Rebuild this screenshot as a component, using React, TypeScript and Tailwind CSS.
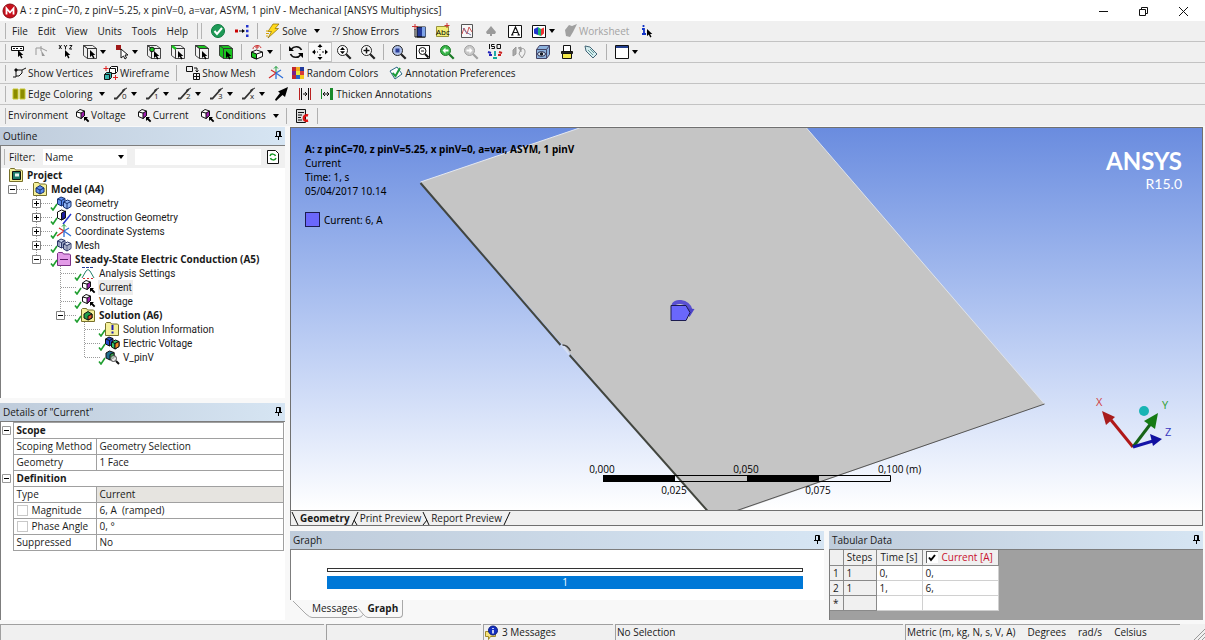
import type { ReactNode } from "react";

type IconProps = { children: ReactNode; className?: string };

const Icon = ({ children, className = "size-4" }: IconProps) => (
    <svg viewBox="0 0 16 16" className={`${className} shrink-0`} fill="none" stroke="#111" strokeWidth="1" aria-hidden="true">
        {children}
    </svg>
);

const Caret = () => (
    <svg viewBox="0 0 6 4" className="h-1 w-1.5 shrink-0" aria-hidden="true"><path d="M0 0h6L3 4z" fill="#000" /></svg>
);

const PinIcon = () => (
    <svg viewBox="0 0 7 10" className="h-2.5 w-[7px]" fill="none" stroke="#000" aria-hidden="true">
        <path d="M1.500 5.500v-5h4v5M0 5.500h7M3.500 6v3M4.500 1v4" />
    </svg>
);

const Cursor = ({ x = 8, y = 7 }: { x?: number; y?: number }) => (
    <path d="M0 0v7l1.800-1.600 1.400 3 1.300-.6-1.400-2.800h2.200z" fill="#000" stroke="none" transform={`translate(${x} ${y})`} />
);

const CubeIcon = ({ front = "none", side = "none", top = "none", children }: { front?: string; side?: string; top?: string; children?: ReactNode }) => (
    <Icon>
        <g strokeWidth=".9" stroke="#333">
            <path d="M1.500 1.500h9l4 3h-9z" fill={top} />
            <path d="M1.500 1.500l4 3v10l-4-3z" fill={side} />
            <path d="M5.500 4.500h9v10h-9z" fill={front} />
        </g>
        {children}
    </Icon>
);

// purple boundary-condition cube with a pointer
const LoadIcon = () => (
    <Icon>
        <path d="M2.500 4l3.500-2.500 4.500 1.500v4.500L7 10.500l-4.500-2z" fill="#fff" />
        <path d="M7 5l3.500-2v4.500L7 10.500z" fill="#a020b0" />
        <path d="M2.500 4L7 5" />
        <path d="M10 9h4l-1.300 1.300 2.600 2.700-1.300 1.300-2.600-2.600L10 13z" fill="#000" stroke="none" />
    </Icon>
);

const CubesIcon = ({ a = "#5b8def", b = "#8fb4f5", stroke = "#16306e" }: { a?: string; b?: string; stroke?: string }) => (
    <g stroke={stroke}>
        <path d="M1.500 4l3.500-2 4 1.500v5L5.500 11l-4-2z" fill={a} />
        <path d="M1.500 4l4 1.500L9 3.500M5.500 5.500V11" />
        <path d="M7.500 7l4-2 3.500 1.500v5L11 14l-3.500-2z" fill={b} />
        <path d="M7.500 7l3.500 1.500L15 6.500M11 8.500V14" />
    </g>
);

const FolderIcon = ({ fill = "#f5f09a", stroke = "#77702a", children }: { fill?: string; stroke?: string; children?: ReactNode }) => (
    <Icon>
        <path d="M1.500 14.500v-12l1-1h4l1 1.500h6l1 1v10.500z" fill={fill} stroke={stroke} />
        {children}
    </Icon>
);

const AxesIcon = () => (
    <Icon>
        <path d="M8 8V1.500M6 3.500l2-2 2 2" stroke="#1c9c3c" />
        <path d="M8 8L1 13M8 8L3 5" stroke="#d22b2b" strokeWidth="1.300" />
        <path d="M8 8l7 5M8 8l5-3M8 8v6" stroke="#2f6fd8" strokeWidth="1.300" />
    </Icon>
);

const ZoomIcon = ({ lens = "#fff", color = "#222", children }: { lens?: string; color?: string; children?: ReactNode }) => (
    <Icon>
        <circle cx="6.500" cy="6.500" r="5" fill={lens} stroke={color} />
        <path d="M10.200 10.200l4.500 4.500" stroke={color} strokeWidth="2.200" />
        {children}
    </Icon>
);

const EdgeIcon = ({ mark }: { mark: string }) => (
    <Icon>
        <path d="M1 12.500h2.500L12 3" strokeWidth="1.800" stroke="#333" />
        <path d="M9 4.500L14 2" stroke="#333" />
        <text x="9" y="13" fontSize="8" fill="#222" stroke="none">{mark}</text>
    </Icon>
);

const Grip = () => <span className="h-4 w-0.5 shrink-0 border-r border-[#b4b4b4]" />;
const Sep = () => <span className="mx-[3px] h-4 w-px shrink-0 bg-[#b0b0b0]" />;

const Tool = ({ label, children, drop = false, pressed = false }: { label: string; children: ReactNode; drop?: boolean; pressed?: boolean }) => (
    <button
        type="button"
        aria-label={label}
        className={`flex h-5 shrink-0 items-center justify-center gap-0.5 ${drop ? "w-8" : "w-6"} ${pressed ? "border border-[#c4c4c4] bg-[#fafafa]" : ""}`}
    >
        {children}
        {drop && <Caret />}
    </button>
);

const TextTool = ({ text, icon, drop = false, className = "" }: { text: string; icon?: ReactNode; drop?: boolean; className?: string }) => (
    <button type="button" className={`flex h-5 shrink-0 items-center gap-px whitespace-nowrap ${className}`}>
        {icon}
        <span>{text}</span>
        {drop && <span className="pl-1.5"><Caret /></span>}
    </button>
);

const Row = ({ children }: { children: ReactNode }) => (
    <div className="flex h-[21px] items-center overflow-hidden border-b border-[#c3c3c3] pl-1">
        {children}
    </div>
);

const TitleBar = () => (
    <header className="flex h-[21px] shrink-0 items-center bg-white pl-0.5">
        <Icon>
            <circle cx="8" cy="8" r="7" fill="#c8101c" stroke="#8a0a12" />
            <path d="M4.500 11.500v-6l3.500 4 3.500-4v6" stroke="#fff" strokeWidth="1.800" />
        </Icon>
        <h1 className="flex-1 truncate pl-0.5">A : z pinC=70, z pinV=5.25, x pinV=0, a=var, ASYM, 1 pinV - Mechanical [ANSYS Multiphysics]</h1>
        <button type="button" aria-label="Minimize" className="flex w-10 justify-center">
            <Icon><path d="M4 8.500h9" /></Icon>
        </button>
        <button type="button" aria-label="Restore" className="flex w-10 justify-center">
            <Icon><path d="M4.500 6.500h6v6h-6zM6.500 6V4.500h6v6H11" /></Icon>
        </button>
        <button type="button" aria-label="Close" className="flex w-10 justify-center">
            <Icon><path d="M4 4l9 9M13 4l-9 9" /></Icon>
        </button>
        <span className="w-0.5" />
    </header>
);

const menus = ["File", "Edit", "View", "Units", "Tools", "Help"];

const MenuRow = () => (
    <Row>
        <Grip />
        <nav className="flex gap-2.5 pl-1.5 pr-2">
            {menus.map((name) => <button key={name} type="button">{name}</button>)}
        </nav>
        <Grip />
        <span className="w-0.5" />
        <Grip />
        <div className="flex items-center pl-1">
            <Tool label="Solver status">
                <Icon>
                    <circle cx="8" cy="8" r="6.500" fill="#1e9a57" stroke="#0d7a3e" />
                    <path d="M4.500 8l2.500 3 5-6" stroke="#fff" strokeWidth="2" />
                </Icon>
            </Tool>
            <Tool label="Connections">
                <Icon>
                    <path d="M5 8h4" />
                    <path d="M1 6.500h3v3H1z" fill="#c00" stroke="none" />
                    <path d="M8 6l3 2-3 2z" fill="#000" stroke="none" />
                    <path d="M12 2h2.500v2.500H12zM12 6.700h2.500v2.500H12zM12 11.500h2.500V14H12z" fill="#2233cc" stroke="none" />
                </Icon>
            </Tool>
            <Sep />
            <TextTool text="Solve" drop className="pl-1" icon={
                <Icon>
                    <path d="M8 1h6l-4 4.500h3.500L3 15l3.500-6.500H3z" fill="#ffd91a" stroke="#8a6a00" strokeWidth=".7" />
                    <path d="M1 8h3M1 10.500h3M1 13h2" stroke="#d8a400" />
                </Icon>
            } />
            <TextTool text="?/ Show Errors" className="pl-3 pr-2" />
        </div>
        <Tool label="Insert chart">
            <Icon>
                <path d="M6 4h8.500v10H6z" fill="#243a9c" stroke="#111" />
                <path d="M11 4h3.500v10H11z" fill="#7fa4e8" stroke="none" />
                <path d="M1 3.500h6M4 1v6" stroke="#c33" /><path d="M4 6v8h10" />
            </Icon>
        </Tool>
        <Tool label="Insert comment">
            <Icon>
                <path d="M1.500 3.500h12v10h-12z" fill="#f1ee77" stroke="#99933a" />
                <text x="1" y="12" fontSize="8" fill="#000" stroke="none">Abc</text>
                <path d="M12 0v5M9.500 2.500h5" stroke="#c33" />
            </Icon>
        </Tool>
        <Tool label="Insert figure">
            <Icon>
                <path d="M2.500 1.500h11v13h-11z" fill="#f7f7f7" stroke="#555" />
                <path d="M3 11l2-6 3 6 2-7 3 5" stroke="#c55" /><path d="M4 5l3 4 5 3" stroke="#77a" />
            </Icon>
        </Tool>
        <Tool label="Insert image"><Icon><path d="M8 3l5 6-1 2H9v2H7v-2H4L3 9z" fill="#9b9b9b" stroke="none" /></Icon></Tool>
        <Tool label="Insert text">
            <Icon><path d="M1.500 2.500h13v12h-13z" fill="#fff" /><path d="M5 12l3.500-8L12 12M6 9.500h5M4 12h2.500M10.500 12H13" strokeWidth="1.200" /></Icon>
        </Tool>
        <Tool label="View results" drop>
            <Icon>
                <path d="M1.500 2.500h13v12h-13z" fill="#fff" />
                <path d="M3 6l4-2v8l-4-1.500z" fill="#2233cc" stroke="none" /><path d="M7 4l3 2v7l-3-1z" fill="#19b26b" stroke="none" /><path d="M10 6l3-1.500v6L10 13z" fill="#e33" stroke="none" />
            </Icon>
        </Tool>
        <button type="button" disabled className="flex shrink-0 items-center pl-1 text-[#a3a3a3]">
            <Icon><path d="M2 7l4-5 3 1 5-2-4 8-3 5-4-1z" fill="#a0a0a0" stroke="none" /></Icon>
            <span>Worksheet</span>
        </button>
        <span className="w-1.5" />
        <Tool label="Help pointer">
            <Icon><path d="M4.500 2v2M3 6h2v5M3 11h4" stroke="#1234c8" strokeWidth="1.800" /><Cursor x={8} y={6} /></Icon>
        </Tool>
    </Row>
);

const GREEN = "#19c41f";

const GraphicsRow = () => (
    <Row>
        <Grip />
        <Tool label="Select type"><Icon><path d="M1.500 2.500h12v4h-12z" fill="#fff" /><path d="M3 4.500h2M6 4.500h2M10 4.500h2" /><Cursor x={8} y={6} /></Icon></Tool>
        <Tool label="Hit point"><Icon><path d="M2 11V4h5M7 4l6 3M7 2v5" stroke="#999" /><path d="M7 6l4 6H8z" fill="#999" stroke="none" /></Icon></Tool>
        <Tool label="Coordinates"><Icon><path d="M1 1l2.500 4M3.500 1L1 5M6 1l1.500 2L9 1M7.500 3v2.500M11.500 1.500H14l-2.500 3.500H14" /><Cursor x={7} y={6} /></Icon></Tool>
        <Tool label="Select mode" drop><CubeIcon><Cursor x={8} y={6} /></CubeIcon></Tool>
        <Tool label="Selection filter" drop>
            <Icon><path d="M2 1h5v5H2z" fill="#a01a1a" stroke="none" /><path d="M7 5v9l2.500-2 1.500 3 1.500-1-1.500-3h3z" fill="#fff" /></Icon>
        </Tool>
        <Tool label="Vertex"><CubeIcon><circle cx="6" cy="5.500" r="2.300" fill={GREEN} /><Cursor /></CubeIcon></Tool>
        <Tool label="Edge"><CubeIcon><path d="M2 2l4 3" stroke={GREEN} strokeWidth="2.500" /><Cursor /></CubeIcon></Tool>
        <Tool label="Face"><CubeIcon top={GREEN}><Cursor /></CubeIcon></Tool>
        <Tool label="Body"><CubeIcon top={GREEN} side={GREEN} front={GREEN}><Cursor /></CubeIcon></Tool>
        <Sep />
        <Tool label="Extend selection" drop>
            <Icon>
                <path d="M2.500 8l5-2 6 2v4.500L7.500 15l-5-2z" fill="#fff" /><path d="M2.500 8l5 2v5l-5-2z" fill={GREEN} /><path d="M7.500 10l6-2" />
                <path d="M4 5c0-4 7-5 8-1M8 1v4M6 3h4" stroke="#c33" />
            </Icon>
        </Tool>
        <Sep />
        <Tool label="Rotate"><Icon><path d="M13.500 6c-2-4.500-8-4-10-1M2.500 10c2 4.500 8 4 10 1" strokeWidth="1.600" /><path d="M1 2v5h5zM15 14V9h-5z" fill="#000" stroke="none" /></Icon></Tool>
        <Tool label="Pan" pressed><Icon><path d="M8 2v4M8 10v4M2 8h4M10 8h4" strokeDasharray="2 1" /><path d="M8 0l2.500 3h-5zM8 16l2.500-3h-5zM0 8l3-2.500v5zM16 8l-3-2.500v5z" fill="#000" stroke="none" /></Icon></Tool>
        <Tool label="Zoom"><ZoomIcon><path d="M6.500 3L9 6H4zM6.500 10L9 7.300H4z" fill="#000" stroke="none" /></ZoomIcon></Tool>
        <Tool label="Box zoom"><ZoomIcon><path d="M6.500 3.500v6M3.500 6.500h6" strokeWidth="1.500" /></ZoomIcon></Tool>
        <Sep />
        <Tool label="Zoom to fit"><ZoomIcon lens="#aebfe8"><path d="M4.500 4.500h4v4h-4z" fill="#2b3f99" stroke="none" /></ZoomIcon></Tool>
        <Tool label="Magnifier window"><Icon><path d="M1.500 1.500h13v13h-13z" fill="#fff" /><circle cx="7.500" cy="7" r="3.500" /><path d="M10 10l3.500 3.500" strokeWidth="2" /><path d="M6 7h3" /></Icon></Tool>
        <Tool label="Previous view"><ZoomIcon lens="#39b54a" color="#1b7a26"><path d="M3.500 6.500l3-3v2h3v2h-3v2z" fill="#fff" stroke="none" /></ZoomIcon></Tool>
        <Tool label="Next view"><ZoomIcon lens="#c9c9c9" color="#a0a0a0"><path d="M9.500 6.500l-3-3v2h-3v2h3v2z" fill="#fff" stroke="none" /></ZoomIcon></Tool>
        <Tool label="Isometric view">
            <Icon>
                <path d="M2.500 0v5M4.500 4.500h3v-2h-3V.5h3M10 .5h3.500v4H10z" />
                <path d="M8 7v5" stroke="#2aa" strokeWidth="2" /><path d="M1 8l3 1M2 11h3" stroke="#22b" strokeWidth="2" /><path d="M12 8l3 1M11 11h3" stroke="#c22" strokeWidth="2" /><path d="M6 14h4" stroke="#1a9" strokeWidth="2" />
            </Icon>
        </Tool>
        <Tool label="Look at"><Icon><path d="M2 12V6l3-3v7zM7 4l3-1v5" fill="#aaa" stroke="#999" /><path d="M10 5c4-2 5 3 3 6l-2 3-3-4z" stroke="#999" /></Icon></Tool>
        <Tool label="Manage views"><Icon><path d="M1.500 5.500l3-4h10v9l-3 4h-10z" fill="#8db2dd" stroke="#446" /><path d="M1.500 5.500h10v9M11.500 5.500l3-4" stroke="#446" /><ellipse cx="6.500" cy="10" rx="4" ry="2.300" fill="#dbe8f6" stroke="#224" /><circle cx="6.500" cy="10" r="1.200" fill="#124" /></Icon></Tool>
        <Tool label="Print"><Icon><path d="M4.500 1.500h7v6h-7z" fill="#fff" /><path d="M2.500 7.500h11v2h-11z" fill="#222" /><path d="M3.500 9.500h9v5h-9z" fill="#f3e84a" /></Icon></Tool>
        <Tool label="Tags"><Icon><path d="M2 2l5 1 7 7-4 4-7-7z" fill="#d4edef" stroke="#467" /><path d="M5 6l5 5M7 5l4 4" stroke="#699" /></Icon></Tool>
        <Sep />
        <Tool label="Layout" drop><Icon><path d="M1.500 1.500h13v13h-13z" fill="#fff" /><path d="M2 2h12v2H2z" fill="#24408f" stroke="none" /></Icon></Tool>
    </Row>
);

const DisplayRow = () => (
    <Row>
        <Grip />
        <TextTool className="pl-[5px]" text="Show Vertices" icon={<Icon><path d="M2 12h3V5h6v3l-3 3H5M11 5l4-2" /><path d="M4 4h2v2H4z" fill="#000" /></Icon>} />
        <TextTool className="pl-2.5" text="Wireframe" icon={
            <Icon><path d="M6.500 3.500l2-2h6v5l-2 2h-6z" fill="#fff" /><path d="M1.500 9.500l2-2h5v5l-2 2h-5z" fill="#36b3ab" /><path d="M1.500 9.500h5v5M6.500 3.500h6v5" /><path d="M3 1v5M.5 3.500h5M12.500 10v5M10 12.500h5" stroke="#d22" /></Icon>
        } />
        <span className="w-1" />
        <Sep />
        <TextTool className="pl-[5px]" text="Show Mesh" icon={<Icon><path d="M1.500 1.500h6v5h-6zM8.500 8.500h6v6h-6zM11.500 8.500v6M8.500 11.500h6M9 3h3v4M10.500 5.500L12 7l1.500-1.500" /></Icon>} />
        <span className="w-2" />
        <Tool label="Coordinate axes"><AxesIcon /></Tool>
        <TextTool className="pl-0.5" text="Random Colors" icon={
            <Icon>
                <g stroke="none">
                    <path d="M2 2h4v4H2z" fill="#c2272d" /><path d="M6 2h4v4H6z" fill="#f2a81d" /><path d="M10 2h4v4h-4z" fill="#223a9c" />
                    <path d="M2 6h4v4H2z" fill="#7a1f8a" /><path d="M6 6h4v4H6z" fill="#e8e83a" /><path d="M10 6h4v4h-4z" fill="#d63a3a" />
                    <path d="M2 10h4v4H2z" fill="#c2272d" /><path d="M6 10h4v4H6z" fill="#2563c9" /><path d="M10 10h4v4h-4z" fill="#f2cb1d" />
                </g>
            </Icon>
        } />
        <TextTool className="pl-2.5" text="Annotation Preferences" icon={<Icon><path d="M2 6l7-4 5 7-7 5z" fill="#fff" stroke="#2c6a86" /><path d="M4.500 8l3 3L12 3" stroke="#1c9c3c" strokeWidth="2" /></Icon>} />
    </Row>
);

const EdgeRow = () => (
    <Row>
        <Grip />
        <TextTool className="pl-[5px]" text="Edge Coloring" drop icon={<Icon><path d="M2 3h5v10H2zM9 3h5v10H9z" fill="#8b8b00" stroke="#c8c832" /></Icon>} />
        <span className="w-1" />
        {["0", "1", "2", "3", "x"].map((mark) => <Tool key={mark} label={`Edge style ${mark}`} drop><EdgeIcon mark={mark} /></Tool>)}
        <Tool label="Edge direction"><Icon><path d="M15 1l-3 10-2.500-2L3 15l-1-1.500L7 7 5 5.500z" fill="#000" stroke="none" /></Icon></Tool>
        <Tool label="Connections gap"><Icon><path d="M2.500 2v12M13.500 2v12" stroke="#b22" /><path d="M4.500 2v12M11.500 2v12" /><path d="M6 8h3M8 6l2 2-2 2" /></Icon></Tool>
        <TextTool className="pl-0.5" text="Thicken Annotations" icon={<Icon><path d="M2.500 3v10" stroke="#1a8a2a" /><path d="M12.500 2v12" stroke="#1a8a2a" strokeWidth="3" /><path d="M4 8h6M6 6L4 8l2 2M8 6l2 2-2 2" /></Icon>} />
    </Row>
);

const EnvironmentRow = () => (
    <div className="flex h-[21px] items-center overflow-hidden pl-1">
        <Grip />
        <span className="pl-0.5 pr-1.5">Environment</span>
        <TextTool text="Voltage" icon={<LoadIcon />} />
        <TextTool className="pl-2.5" text="Current" icon={<LoadIcon />} />
        <TextTool className="pl-2.5" text="Conditions" drop icon={<LoadIcon />} />
        <span className="w-1" />
        <Sep />
        <Tool label="Report">
            <Icon><path d="M2.500 1.500h9v13h-9z" fill="#ddd" /><path d="M4 4.500h6M4 7h4M4 9.500h3M4 12h4" /><path d="M14 7.500c-5-2-6 7 0 5" stroke="#d11" strokeWidth="2.500" /></Icon>
        </Tool>
        <Sep />
    </div>
);

const PanelHeader = ({ title }: { title: string }) => (
    <div className="flex h-[18px] shrink-0 items-center justify-between bg-linear-to-r from-[#bfccdb] to-[#d6e5f3] pl-[3px] pr-[3px]">
        <h2>{title}</h2>
        <button type="button" aria-label={`Pin ${title}`}><PinIcon /></button>
    </div>
);

type TreeItem = { label: string; level: number; icon: ReactNode; bold?: boolean; box?: "+" | "-"; check?: boolean; last?: boolean; selected?: boolean };

const treeItems: TreeItem[] = [
    { label: "Project", level: 0, bold: true, icon: <FolderIcon><path d="M4.500 4.500h8v8h-8z" fill="#1f7a6b" /><path d="M7 6.500h4v3H7z" fill="#e8f4f0" stroke="none" /></FolderIcon> },
    { label: "Model (A4)", level: 1, bold: true, box: "-", last: true, icon: <FolderIcon><path d="M4 7l4-2.500L12 7v4l-4 2-4-2z" fill="#5b8def" stroke="#16306e" /><path d="M4 7l4 2 4-2M8 9v4" stroke="#16306e" /></FolderIcon> },
    { label: "Geometry", level: 2, box: "+", check: true, icon: <Icon><CubesIcon /></Icon> },
    { label: "Construction Geometry", level: 2, box: "+", check: true, icon: <Icon><path d="M1.500 3l4-2 4 1.500V9l-4 2-4-2z" fill="#fff" /><path d="M5.500 4l4-2v6.500L5.500 11z" fill="#1d1d9e" /><path d="M7 15l8-10" stroke="#2233cc" strokeWidth="1.500" /></Icon> },
    { label: "Coordinate Systems", level: 2, box: "+", check: true, icon: <AxesIcon /> },
    { label: "Mesh", level: 2, box: "+", check: true, icon: <Icon><CubesIcon a="#c3cfe8" b="#dfe6f5" stroke="#2a3566" /><path d="M3 5v5M7 4v5M9 8v5M13 7v5" stroke="#2a3566" strokeWidth=".6" /></Icon> },
    { label: "Steady-State Electric Conduction (A5)", level: 2, bold: true, box: "-", check: true, last: true, icon: <FolderIcon fill="#e39be8" stroke="#7a2f86"><path d="M4 8.500h8" stroke="#5a1768" /></FolderIcon> },
    { label: "Analysis Settings", level: 3, check: true, icon: <Icon><path d="M2 2.500h12" stroke="#223a9c" strokeDasharray="3 1" /><path d="M2 13l4-7 2-1.500L10 6l4 7" stroke="#25816c" /><path d="M3 13.500h11" stroke="#c33" strokeDasharray="2 2" /></Icon> },
    { label: "Current", level: 3, check: true, selected: true, icon: <LoadIcon /> },
    { label: "Voltage", level: 3, check: true, icon: <LoadIcon /> },
    { label: "Solution (A6)", level: 3, bold: true, box: "-", check: true, last: true, icon: <FolderIcon><path d="M4 7l4-2.500L12 7v4l-4 2-4-2z" fill="#1f9e4a" /><path d="M8 9l4-2v4l-4 2z" fill="#e2572b" /></FolderIcon> },
    { label: "Solution Information", level: 4, check: true, icon: <FolderIcon><path d="M8.500 4v5" stroke="#1b1bb5" strokeWidth="2" /><path d="M8.500 10.500v2" stroke="#1b1bb5" strokeWidth="2" /></FolderIcon> },
    { label: "Electric Voltage", level: 4, check: true, icon: <Icon><CubesIcon a="#2448c9" b="#2fc46a" stroke="#111" /><path d="M11 8.500l4-2v5L11 14z" fill="#f08a24" /></Icon> },
    { label: "V_pinV", level: 4, check: true, last: true, icon: <Icon><path d="M2 4l3.500-2L10 3.500v5L6 11 2 9z" fill="#1f6f8f" /><path d="M6 5.500l4-2v5L6 11z" fill="#2fae4a" /><circle cx="9.500" cy="9.500" r="3" fill="#ddd" fillOpacity=".7" stroke="#444" /><path d="M12 12l3 3" strokeWidth="2" /></Icon> },
];

const indents = ["pl-[7px]", "pl-[7px]", "pl-[31px]", "pl-[55px]", "pl-[79px]"];

// connector lines and the +/- box drawn left of a tree entry
const Guide = ({ item }: { item: TreeItem }) => (
    <svg viewBox="0 0 24 14" className="h-3.5 w-6 shrink-0" fill="none" stroke="#9a9a9a" aria-hidden="true">
        {item.level > 1 && <path d={item.last ? "M4.500 0v7" : "M4.500 0v14"} strokeDasharray="1 1" />}
        <path d="M9 7.500h12" strokeDasharray="1 1" />
        {!item.box && <path d="M5 7.500h4" strokeDasharray="1 1" />}
        {item.box && <path d="M.5 3.500h8v8h-8z" fill="#fff" stroke="#808080" />}
        {item.box && <path d={item.box === "+" ? "M2 7.500h5M4.500 5v5" : "M2 7.500h5"} stroke="#000" />}
    </svg>
);

const TreeRow = ({ item }: { item: TreeItem }) => (
    <li className={`flex h-3.5 items-center ${indents[item.level]}`}>
        {item.level > 0 && <Guide item={item} />}
        <span className="relative flex">
            {item.icon}
            {item.check && (
                <svg viewBox="0 0 8 8" className="absolute -left-1.5 top-2 size-2" fill="none" stroke="#1f9e2f" strokeWidth="1.600" aria-hidden="true">
                    <path d="M1 4.500L3 7l4-6" />
                </svg>
            )}
        </span>
        <span className={`ml-0.5 whitespace-nowrap px-px ${item.bold ? "font-bold" : "font-[Roboto,sans-serif]"} ${item.selected ? "bg-[#ececec]" : ""}`}>{item.label}</span>
    </li>
);

const OutlinePanel = () => (
    <section className="flex min-h-0 flex-1 flex-col">
        <PanelHeader title="Outline" />
        <div className="flex min-h-0 flex-1 flex-col border-l border-t border-[#7d7d7d] bg-white">
            <div className="flex h-[22px] shrink-0 items-center bg-[#f0f0f0] pl-0.5 pr-1">
                <Grip />
                <label htmlFor="filter-kind" className="pl-1 pr-2">Filter:</label>
                <div className="flex h-4 w-[84px] items-center bg-white pr-[3px]">
                    <select id="filter-kind" className="min-w-0 flex-1 appearance-none bg-white pl-0.5 outline-none">
                        <option>Name</option>
                    </select>
                    <Caret />
                </div>
                <input type="text" aria-label="Filter text" className="ml-2 h-4 min-w-0 flex-1 bg-white outline-none" />
                <button type="button" aria-label="Refresh" className="ml-1">
                    <Icon><path d="M2.500 1.500h8l3 3v10h-11z" fill="#fff" /><path d="M5 7c1-3 5-2 5.500 0M11 9c-1 3-5 2-5.500 0" stroke="#1a9a2a" strokeWidth="1.500" /></Icon>
                </button>
            </div>
            <ul className="flex-1 overflow-hidden">
                {treeItems.map((item) => <TreeRow key={item.label} item={item} />)}
            </ul>
        </div>
    </section>
);

const CollapseBox = () => (
    <svg viewBox="0 0 9 9" className="mx-auto size-[9px]" fill="#fff" stroke="#999" aria-hidden="true">
        <path d="M.5.5h8v8h-8z" /><path d="M2 4.500h5" stroke="#000" />
    </svg>
);

type Detail = { name: string; value?: string; box?: boolean; shaded?: boolean };

const details: Detail[] = [
    { name: "Scope" },
    { name: "Scoping Method", value: "Geometry Selection" },
    { name: "Geometry", value: "1 Face" },
    { name: "Definition" },
    { name: "Type", value: "Current", shaded: true },
    { name: "Magnitude", value: "6, A  (ramped)", box: true },
    { name: "Phase Angle", value: "0, °", box: true },
    { name: "Suppressed", value: "No" },
];

const DetailsPanel = () => (
    <section className="flex h-[217px] shrink-0 flex-col">
        <PanelHeader title={'Details of "Current"'} />
        <div className="flex-1 border-l border-t border-[#7d7d7d] bg-white pr-px">
            <table className="w-full table-fixed border-collapse">
                <colgroup>
                    <col className="w-3" />
                    <col className="w-[83px]" />
                    <col />
                </colgroup>
                <tbody>
                    {details.map((row) => (
                        <tr key={row.name} className="h-4">
                            <td className="p-0">{!row.value && <CollapseBox />}</td>
                            {row.value ? (
                                <>
                                    <td className="whitespace-nowrap border border-[#a0a0a0] p-0 pl-[3px] leading-[15px]">
                                        {row.box ? (
                                            <label className="flex items-center gap-1">
                                                <input type="checkbox" className="size-[11px] appearance-none border border-[#c8c8c8] bg-white" />
                                                {row.name}
                                            </label>
                                        ) : row.name}
                                    </td>
                                    <td className={`whitespace-pre border border-[#a0a0a0] p-0 pl-[3px] leading-[15px] ${row.shaded ? "bg-[#e6e4e0]" : ""}`}>{row.value}</td>
                                </>
                            ) : (
                                <th colSpan={2} className="border border-[#a0a0a0] p-0 pl-[3px] text-left font-bold leading-[15px]">{row.name}</th>
                            )}
                        </tr>
                    ))}
                </tbody>
            </table>
        </div>
    </section>
);

const Scene = () => (
    <svg viewBox="0 0 912 382" preserveAspectRatio="xMidYMid slice" className="absolute inset-0 size-full" aria-hidden="true">
        <path d="M130 54L289 0h227l238 276-309 108h-27z" fill="#c5c5c5" />
        <path d="M130 54L289 0" stroke="#e4e8f0" />
        <path d="M516 0l238 276" stroke="#dfe3ea" />
        <path d="M754 276L445 383" stroke="#555" />
        <path d="M130 55l140 162M279 227l139 157" stroke="#43463f" strokeWidth="2" />
        <path d="M270 217l4 0 4 7 1 4z" fill="#d4def5" />
        <path d="M272 217q5 0 8 6" fill="none" stroke="#444" strokeWidth="1.500" />
        <path d="M383 178c0-6 14-6 17 4" fill="none" stroke="#5a50d0" strokeWidth="4" />
        <path d="M394 180l10 1-5 8z" fill="#4d44c8" />
        <path d="M380.500 177.500h15l4 7-4 8h-15z" fill="#6a67fb" stroke="#1c1c50" />
    </svg>
);

const Ruler = () => (
    <svg viewBox="0 0 400 40" className="absolute bottom-2 left-1/2 h-10 w-[400px] -translate-x-1/2 text-[10px]" aria-hidden="true">
        <path d="M56 13h72v7H56zM200 13h72v7h-72z" fill="#000" />
        <path d="M56.500 13.500h287v6h-287z" fill="none" stroke="#000" />
        <g fill="#000">
            <text x="55" y="11" textAnchor="middle">0,000</text>
            <text x="199" y="11" textAnchor="middle">0,050</text>
            <text x="331" y="11">0,100 (m)</text>
            <text x="127" y="32" textAnchor="middle">0,025</text>
            <text x="271" y="32" textAnchor="middle">0,075</text>
        </g>
    </svg>
);

const Triad = () => (
    <svg viewBox="0 -6 90 62" className="absolute bottom-[58px] right-5 h-[62px] w-[90px] text-[11px]" fill="none" aria-hidden="true">
        <path d="M41 51L19 24" stroke="#b01818" strokeWidth="3" />
        <path d="M10 15l13 6-9 8z" fill="#a81c1c" />
        <path d="M41 51l19-25" stroke="#176317" strokeWidth="3" />
        <path d="M66 17l-14 8 11 8z" fill="#157a15" />
        <path d="M41 51l20-6" stroke="#1414a8" strokeWidth="3" />
        <path d="M70 43l-12-5 3 12z" fill="#1010a0" />
        <circle cx="52" cy="15" r="5" fill="#18b4b4" />
        <text x="4" y="10" fill="#d04040">X</text>
        <text x="70" y="13" fill="#2f9e2f">Y</text>
        <text x="73" y="40" fill="#3838c0">Z</text>
    </svg>
);

const Viewport = () => (
    <div className="relative min-h-0 flex-1 overflow-hidden border border-[#707070] bg-linear-to-b from-[#6a8cdf] to-white">
        <Scene />
        <div className="absolute left-3.5 top-3.5 font-[Noto_Sans,sans-serif] text-[10px] leading-[14px] text-black">
            <p className="whitespace-nowrap font-bold">A: z pinC=70, z pinV=5.25, x pinV=0, a=var, ASYM, 1 pinV</p>
            <p>Current</p>
            <p>Time: 1, s</p>
            <p>05/04/2017 10.14</p>
            <p className="flex items-center gap-1 pt-3.5">
                <span className="size-[15px] border border-[#1c1c50] bg-[#6a67fb]" />
                Current: 6, A
            </p>
        </div>
        <div className="absolute right-5 top-[18px] text-right font-[Lato,sans-serif] text-white">
            <p className="text-2xl font-bold leading-[29px]">ANSYS</p>
            <p className="text-sm leading-[17px]">R15.0</p>
        </div>
        <Ruler />
        <Triad />
    </div>
);

const TabEdge = ({ d }: { d: string }) => (
    <svg viewBox="0 0 8 13" className="h-[13px] w-2 shrink-0" fill="none" stroke="#111" aria-hidden="true"><path d={d} /></svg>
);

const ViewTabs = () => (
    <div className="flex h-[15px] shrink-0 items-center border border-t-0 border-[#707070] bg-[#f0f0f0] leading-[13px]">
        <TabEdge d="M1 0l6 13" />
        <button type="button" className="px-px font-bold">Geometry</button>
        <TabEdge d="M7 0L1 13M3 8l3 5" />
        <button type="button" className="px-px">Print Preview</button>
        <TabEdge d="M1 0l6 13M5 8l-4 5" />
        <button type="button" className="px-px">Report Preview</button>
        <TabEdge d="M7 0L1 13" />
    </div>
);

const GraphPanel = () => (
    <section className="flex min-w-0 flex-1 flex-col">
        <PanelHeader title="Graph" />
        <div className="h-[51px] border-l border-t border-[#7d7d7d] bg-white pl-9 pr-[21px] pt-[18px]">
            <div className="h-1 border border-[#333] bg-white" />
            <div className="mt-1 flex h-[13px] items-center justify-center bg-[#0078d7] text-white">1</div>
        </div>
        <div className="flex h-5 items-start pl-0.5">
            <svg viewBox="0 0 20 18" className="h-[18px] w-5" fill="none" stroke="#a8a8a8" aria-hidden="true"><path d="M1 1l13 13q4 3.500 6 3.500" /></svg>
            <button type="button" className="h-[18px] border-b border-[#a8a8a8]">Messages</button>
            <svg viewBox="0 0 10 18" className="h-[18px] w-2.5" fill="none" stroke="#a8a8a8" aria-hidden="true"><path d="M0 8l5 6q3 3.500 5 3.500M0 17.500q4 0 5-3" /></svg>
            <button type="button" className="h-[18px] rounded-br-sm border-b border-r border-[#a8a8a8] pr-1 font-bold">Graph</button>
        </div>
    </section>
);

const TabularPanel = () => (
    <section className="flex w-[374px] shrink-0 flex-col">
        <PanelHeader title="Tabular Data" />
        <div className="flex-1 border-l border-t border-[#7d7d7d] bg-[#a0a0a0]">
            <table className="w-[169px] table-fixed border-collapse bg-white text-left leading-[14px]">
                <colgroup>
                    <col className="w-[13px]" />
                    <col className="w-[33px]" />
                    <col className="w-[46px]" />
                    <col />
                </colgroup>
                <thead>
                    <tr className="h-[15px] whitespace-nowrap bg-[#f0f0f0]">
                        <th className="border-b border-r border-[#8a8a8a] p-0" aria-label="Row" />
                        <th className="border-b border-r border-[#8a8a8a] p-0 text-center font-normal">Steps</th>
                        <th className="border-b border-r border-[#8a8a8a] p-0 text-center font-normal">Time [s]</th>
                        <th className="border-b border-r border-[#8a8a8a] p-0 pl-[3px] font-normal text-[#c8102e]">
                            <label className="flex items-center gap-1">
                                <span className="relative flex size-3 items-center justify-center border-l border-t border-[#666] bg-white">
                                    <input type="checkbox" defaultChecked className="absolute inset-0 appearance-none" />
                                    <svg viewBox="0 0 8 8" className="size-2" fill="none" stroke="#000" strokeWidth="2" aria-hidden="true"><path d="M1 3.500L3 6l4-5" /></svg>
                                </span>
                                Current [A]
                            </label>
                        </th>
                    </tr>
                </thead>
                <tbody>
                    {[["1", "1", "0,", "0,"], ["2", "1", "1,", "6,"], ["*", "", "", ""]].map(([no, step, time, amps]) => (
                        <tr key={no} className="h-[15px]">
                            <td className="border-b border-r border-[#8a8a8a] bg-[#f0f0f0] p-0 pl-[3px]">{no}</td>
                            <td className="border-b border-r border-[#8a8a8a] bg-[#f0f0f0] p-0 pl-[3px]">{step}</td>
                            <td className="border-b border-r border-[#d0d0d0] p-0 pl-[3px]">{time}</td>
                            <td className="border-b border-r border-[#d0d0d0] p-0 pl-[3px]">{amps}</td>
                        </tr>
                    ))}
                </tbody>
            </table>
        </div>
    </section>
);

const StatusBar = () => (
    <footer className="flex h-4 shrink-0 gap-0.5 bg-[#f0f0f0] leading-[15px]">
        <div className="w-[324px] shrink-0 border-l border-t border-[#a0a0a0]" />
        <div className="w-[155px] shrink-0 border-l border-t border-[#a0a0a0]" />
        <div className="flex w-[130px] shrink-0 items-center gap-0.5 border-l border-t border-[#a0a0a0]">
            <Icon><path d="M1.500 6.500h10v5h-5l-2 3v-3h-3z" fill="#f6e27a" stroke="#a08a2a" /><circle cx="9" cy="5.500" r="4.500" fill="#1530c0" stroke="#0a1c80" /><path d="M9 3v1M9 5v3.500" stroke="#fff" strokeWidth="1.500" /></Icon>
            <span>3 Messages</span>
        </div>
        <div className="min-w-0 flex-1 border-l border-t border-[#a0a0a0] pl-px">No Selection</div>
        <div className="flex w-[275px] shrink-0 gap-3 whitespace-nowrap border-l border-t border-[#a0a0a0] pl-px">
            <span>Metric (m, kg, N, s, V, A)</span>
            <span>Degrees</span>
            <span>rad/s</span>
            <span>Celsius</span>
        </div>
        <svg viewBox="0 0 23 16" className="h-4 w-[23px] shrink-0" stroke="#999" aria-hidden="true"><path d="M23 5L12 16M23 9l-7 7M23 13l-3 3" /></svg>
    </footer>
);

export default function App() {
    return (
        <div className="flex h-screen min-h-[480px] flex-col overflow-hidden bg-[#f8f8f8] font-[Open_Sans,sans-serif] text-[10px] text-[#1a1a1a]">
            <TitleBar />
            <div className="shrink-0 bg-[#f0f0f0]">
                <MenuRow />
                <GraphicsRow />
                <DisplayRow />
                <EdgeRow />
                <EnvironmentRow />
            </div>
            <main className="flex min-h-0 flex-1 gap-[5px] pb-1 pr-0.5 pt-px">
                <aside className="flex w-[285px] shrink-0 flex-col gap-[5px]">
                    <OutlinePanel />
                    <DetailsPanel />
                </aside>
                <div className="flex min-w-0 flex-1 flex-col">
                    <Viewport />
                    <ViewTabs />
                    <div className="mt-[5px] flex h-[89px] shrink-0 gap-[5px]">
                        <GraphPanel />
                        <TabularPanel />
                    </div>
                </div>
            </main>
            <StatusBar />
        </div>
    );
}
